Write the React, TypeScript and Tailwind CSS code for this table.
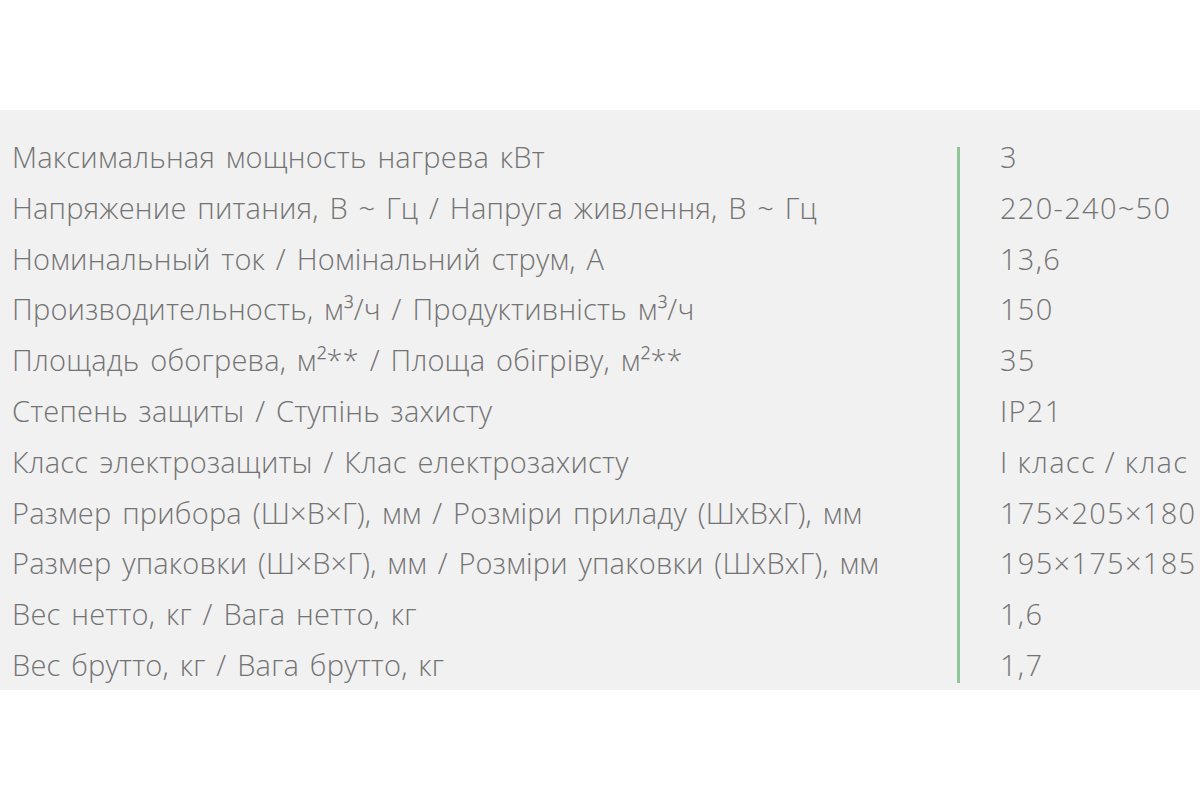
const rows: [string, string][] = [
  ["Максимальная мощность нагрева кВт", "3"],
  ["Напряжение питания, В ~ Гц / Напруга живлення, В ~ Гц", "220-240~50"],
  ["Номинальный ток / Номінальний струм, А", "13,6"],
  ["Производительность, м³/ч / Продуктивність м³/ч", "150"],
  ["Площадь обогрева, м²** / Площа обігріву, м²**", "35"],
  ["Степень защиты / Ступінь захисту", "IP21"],
  ["Класс электрозащиты / Клас електрозахисту", "I класс / клас"],
  ["Размер прибора (Ш×В×Г), мм / Розміри приладу (ШхВхГ), мм", "175×205×180"],
  ["Размер упаковки (Ш×В×Г), мм / Розміри упаковки (ШхВхГ), мм", "195×175×185"],
  ["Вес нетто, кг / Вага нетто, кг", "1,6"],
  ["Вес брутто, кг / Вага брутто, кг", "1,7"],
];

export default function App() {
  return (
    <div
      className="w-[1200px] h-[800px] bg-white overflow-hidden pt-[110px]"
      style={{ fontFamily: '"Open Sans", "Noto Sans", sans-serif' }}
    >
      <div className="flex h-[580px] bg-[#f1f1f1] pt-[22px] text-[29px] font-light text-[#737373]">
        <div className="w-[957px] shrink-0 pl-[12px] tracking-[0.2px] [word-spacing:3px]">
          {rows.map(([label]) => (
            <div key={label} className="h-[50.8px] leading-[50.8px] whitespace-nowrap">
              {label}
            </div>
          ))}
        </div>
        <div className="w-[3px] shrink-0 bg-[#8ec69a] mt-[15px] mb-[7px]"></div>
        <div className="flex-1 min-w-0 overflow-hidden pl-[40px] tracking-[1.3px]">
          {rows.map(([label, value]) => (
            <div key={label} className="h-[50.8px] leading-[50.8px] whitespace-nowrap">
              {value}
            </div>
          ))}
        </div>
      </div>
    </div>
  );
}
